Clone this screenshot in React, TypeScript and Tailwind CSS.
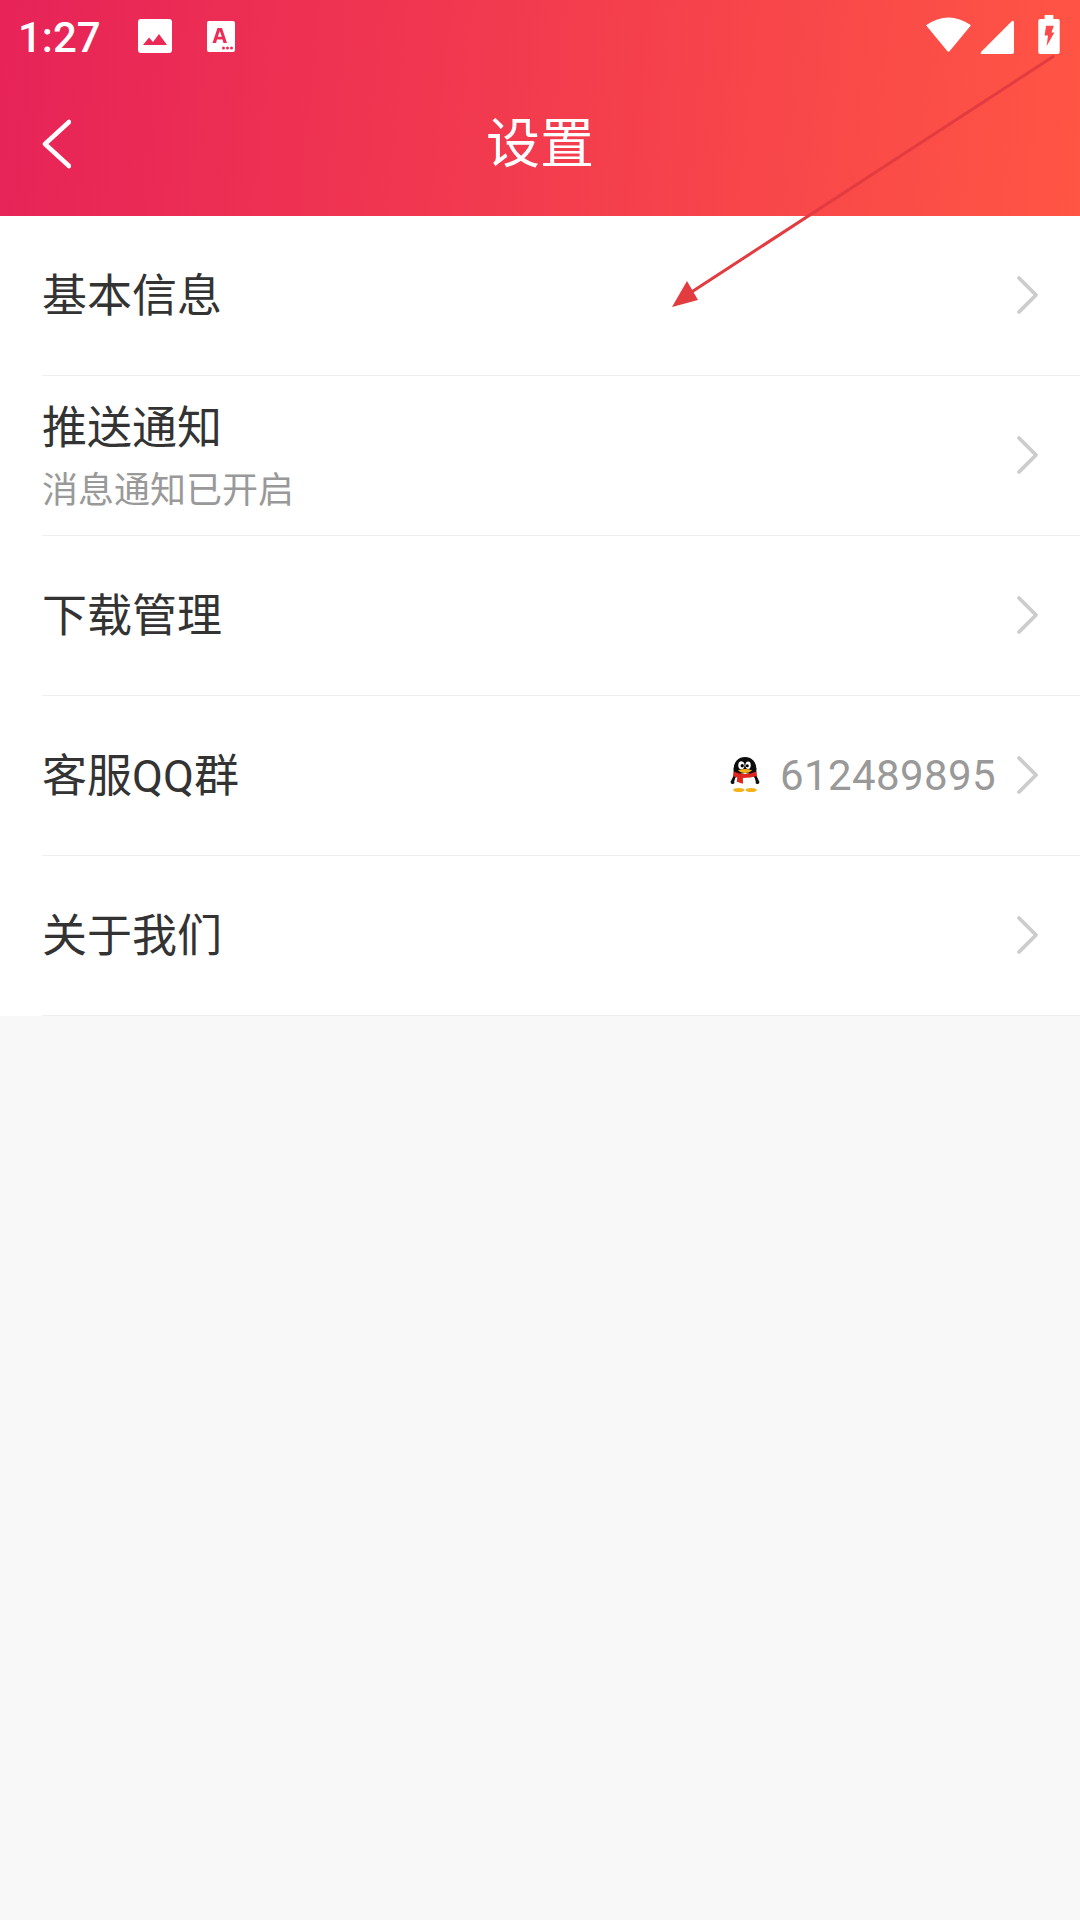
import React from "react";

const Chevron = () => (
  <svg width="24" height="40" viewBox="0 0 24 40" className="shrink-0 -mt-[2px]" fill="none">
    <path d="M3 3 L20 20 L3 37" stroke="#cccccc" strokeWidth="3.8" strokeLinecap="round" strokeLinejoin="round" />
  </svg>
);

const Penguin = () => (
  <svg width="30" height="35" viewBox="0 0 28 34" className="shrink-0 -mt-[2px] -ml-[1px]">
    <path d="M4 16 L0 24 Q0 27 3 26 L7 23Z" fill="#111" />
    <path d="M24 16 L28 24 Q28 27 25 26 L21 23Z" fill="#111" />
    <ellipse cx="14" cy="11" rx="11" ry="11" fill="#0c0c0c" />
    <rect x="3" y="11" width="22" height="13" fill="#0c0c0c" />
    <ellipse cx="14" cy="24" rx="10.5" ry="8.5" fill="#ffffff" />
    <path d="M3 14 Q14 19 25 14 L25.5 18.5 Q20 20.5 12 20.5 L12 26 L6 24 L6.5 20 Q4 19.5 2.5 18.5Z" fill="#e0261c" />
    <ellipse cx="10.5" cy="8" rx="3" ry="3.8" fill="#fff" />
    <ellipse cx="17" cy="8" rx="2.6" ry="3.6" fill="#fff" />
    <circle cx="11.3" cy="8.5" r="1.6" fill="#000" />
    <circle cx="16.2" cy="8.5" r="1.5" fill="#000" />
    <path d="M7 13 Q14 10.5 21 13 Q14 18 7 13Z" fill="#f5b21a" />
    <ellipse cx="8" cy="32" rx="5.5" ry="2" fill="#f5b21a" />
    <ellipse cx="20" cy="32" rx="5.5" ry="2" fill="#f5b21a" />
  </svg>
);

const Row = ({ title, sub, right }: { title: string; sub?: string; right?: React.ReactNode }) => (
  <div className="ml-[42px] h-[160px] flex items-center border-b border-[#eeeeee] pr-[40px]">
    <div className="flex-1 min-w-0 flex flex-col">
      <div className={sub ? "text-[45px] leading-[56px] text-[#333333] mt-[3px]" : "text-[45px] leading-[56px] text-[#333333] mt-[2px]"}>{title}</div>
      {sub && <div className="text-[36px] leading-[44px] text-[#999999] mt-[12px]">{sub}</div>}
    </div>
    {right}
    <Chevron />
  </div>
);

export default function App() {
  return (
    <div
      className="relative w-[1080px] h-[1920px] overflow-hidden bg-[#f8f8f8]"
      style={{ fontFamily: '"Roboto", "Noto Sans CJK SC", sans-serif' }}
    >
      <header className="h-[216px] bg-[linear-gradient(96deg,#e72358_0%,#ff5544_100%)] text-white flex flex-col">
        <div className="h-[72px] flex items-center pl-[18px] pr-[20px]">
          <span className="text-[42px] leading-none w-[120px] mt-[4px]" style={{ fontWeight: 500 }}>1:27</span>
          <svg width="34" height="34" viewBox="0 0 34 34" className="shrink-0">
            <path fillRule="evenodd" fill="#fff" d="M3 0 H31 Q34 0 34 3 V31 Q34 34 31 34 H3 Q0 34 0 31 V3 Q0 0 3 0Z M5 26 H29 L21 15 L15 23 L11 18.5Z" />
          </svg>
          <svg width="28" height="31" viewBox="0 0 28 31" className="shrink-0 ml-[35px]">
            <path fillRule="evenodd" fill="#fff" d="M2 0 H26 Q28 0 28 2 V29 Q28 31 26 31 H2 Q0 31 0 29 V2 Q0 0 2 0Z M10.5 7 L5.5 22 H9 L10 18.5 H15.5 L16.5 22 H20 L15 7Z M10.8 15.8 L12.8 10 L14.8 15.8Z" />
            <circle cx="16.5" cy="27" r="1.5" fill="#ee2a55" />
            <circle cx="20.5" cy="27" r="1.5" fill="#ee2a55" />
            <circle cx="24.5" cy="27" r="1.5" fill="#ee2a55" />
          </svg>
          <div className="flex-1" />
          <svg width="45" height="36" viewBox="0 0 46 36" className="shrink-0 -mt-[2px]">
            <path fill="#fff" d="M0 8 Q23 -8 46 8 L24.5 34 Q23 36 21.5 34Z" />
          </svg>
          <svg width="34" height="34" viewBox="0 0 34 34" className="shrink-0 ml-[9px] mt-[2px]">
            <path fill="#fff" d="M32 1 Q34 0 34 3 V32 Q34 34 32 34 H2 Q0 34 1 32Z" />
          </svg>
          <svg width="22" height="39" viewBox="0 0 22 40" className="shrink-0 ml-[24px] -mt-[3px]">
            <path fill="#fff" d="M6.5 0 H15.5 V4 H20 Q22 4 22 6 V38 Q22 40 20 40 H2 Q0 40 0 38 V6 Q0 4 2 4 H6.5Z" />
            <path fill="#fa4a4c" d="M8 11 H16 L13.5 18 H16.5 L8.5 32 L10 21 H6.5Z" />
          </svg>
        </div>
        <div className="h-[144px] relative flex items-center justify-center">
          <svg width="30" height="50" viewBox="0 0 30 50" className="absolute left-[41px] top-[47px]">
            <path d="M28 3 L4 25 L28 47" fill="none" stroke="#fff" strokeWidth="4.5" strokeLinecap="round" strokeLinejoin="round" />
          </svg>
          <h1 className="text-[54px] font-normal leading-none mt-[2px]">设置</h1>
        </div>
      </header>

      <section className="bg-white">
        <Row title="基本信息" />
        <Row title="推送通知" sub="消息通知已开启" />
        <Row title="下载管理" />
        <Row
          title="客服QQ群"
          right={
            <div className="flex items-center mr-[20px]">
              <Penguin />
              <span className="ml-[20px] text-[42px] tracking-[0.4px] text-[#999999] leading-none">612489895</span>
            </div>
          }
        />
        <Row title="关于我们" />
      </section>

      <svg className="absolute left-0 top-0 pointer-events-none" width="1080" height="320" viewBox="0 0 1080 320">
        <line x1="1054" y1="56" x2="690" y2="293" stroke="#e23b40" strokeWidth="3" />
        <path d="M672 307 L687 281 L698 300Z" fill="#e23b40" />
      </svg>
    </div>
  );
}
